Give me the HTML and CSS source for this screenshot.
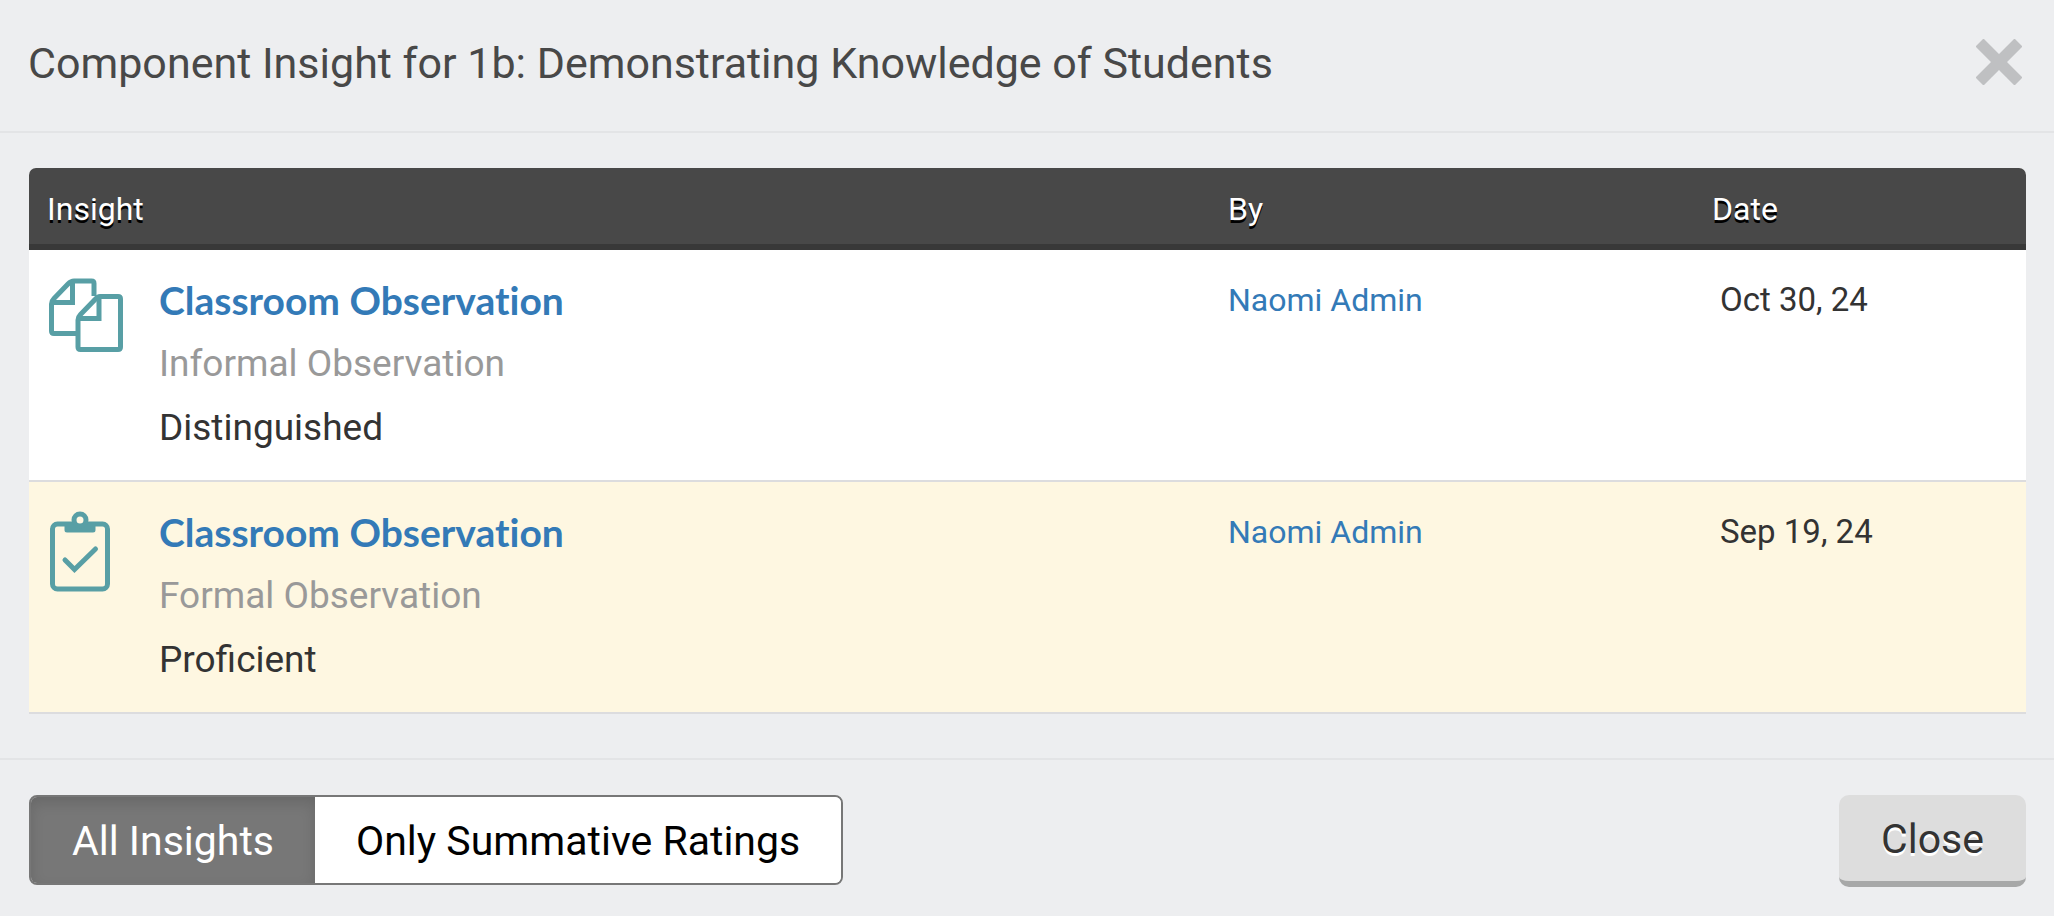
FILE: index.html
```html
<!DOCTYPE html>
<html lang="en">
<head>
    <meta charset="UTF-8">
    <meta name="viewport" content="width=device-width, initial-scale=1.0">
    <title>Component Insight</title>
    <link rel="stylesheet" href="styles.css">
</head>
<body>
    <div class="modal">
        <header class="modal-header">
            <h1 class="modal-title">Component Insight for 1b: Demonstrating Knowledge of Students</h1>
            <button type="button" class="close-icon" aria-label="Close">
                <svg viewBox="0 0 46 46" width="46" height="46">
                    <path d="M7 0 H8 L23 15 L38 0 H39 L46 7 V8 L31 23 L46 38 V39 L39 46 H38 L23 31 L8 46 H7 L0 39 V38 L15 23 L0 8 V7 Z"/>
                </svg>
            </button>
        </header>

        <div class="modal-body">
            <table class="insights">
                <thead>
                    <tr>
                        <th class="col-insight">Insight</th>
                        <th class="col-by">By</th>
                        <th class="col-date">Date</th>
                    </tr>
                </thead>
                <tbody>
                    <tr>
                        <td>
                            <div class="insight">
                                <svg class="insight-icon" viewBox="0 0 80 92" width="80" height="92">
                                    <path d="M31 65.5 H7 Q4.5 65.5 4.5 63 V36 Q4.5 33 7 30.5 L21 16 Q24 13 27 13 H44.5 Q47 13 47 15.5 V28"/>
                                    <path d="M25.5 13 V34.5 H5"/>
                                    <path d="M53 28.5 H71 Q73.5 28.5 73.5 31 V79 Q73.5 81.5 71 81.5 H33.5 Q31 81.5 31 79 V52 Q31 49 33.5 46.5 L48 31.5 Q50.5 28.5 53 28.5 Z"/>
                                    <path d="M52 29 V50.5 H31"/>
                                </svg>
                                <div>
                                    <a href="#" class="insight-name">Classroom Observation</a>
                                    <p class="insight-type">Informal Observation</p>
                                    <p class="insight-rating">Distinguished</p>
                                </div>
                            </div>
                        </td>
                        <td><a href="#">Naomi Admin</a></td>
                        <td class="date">Oct 30, 24</td>
                    </tr>
                    <tr class="summative">
                        <td>
                            <div class="insight">
                                <svg class="insight-icon" viewBox="0 0 80 92" width="80" height="92">
                                    <rect x="5.5" y="24" width="55" height="65" rx="5"/>
                                    <path d="M20 24.5 V30 H46 V24.5 Z" stroke-linejoin="round" fill="#589fa5"/>
                                    <circle cx="33" cy="20" r="6" fill="#fef7e1"/>
                                    <path d="M18 60 L27.5 69.5 L48.500 49" stroke-linecap="round"/>
                                </svg>
                                <div>
                                    <a href="#" class="insight-name">Classroom Observation</a>
                                    <p class="insight-type">Formal Observation</p>
                                    <p class="insight-rating">Proficient</p>
                                </div>
                            </div>
                        </td>
                        <td><a href="#">Naomi Admin</a></td>
                        <td class="date">Sep 19, 24</td>
                    </tr>
                </tbody>
            </table>
        </div>

        <footer class="modal-footer">
            <div class="btn-group">
                <button type="button" class="btn-toggle active">All Insights</button>
                <button type="button" class="btn-toggle">Only Summative Ratings</button>
            </div>
            <button type="button" class="btn-close">Close</button>
        </footer>
    </div>
</body>
</html>
```

FILE: styles.css
```css
* {
    box-sizing: border-box;
}
body {
    margin: 0;
    background: #edeef0;
    color: #333;
    font-family: Roboto, "Liberation Sans", sans-serif;
    font-size: 32px;
}
a {
    color: #337ab7;
    text-decoration: none;
}
button {
    font-family: inherit;
    cursor: pointer;
}
.modal-header {
    display: flex;
    justify-content: space-between;
    align-items: flex-start;
    padding: 33px 28px 37px;
    border-bottom: 2px solid #e3e4e6;
}
.modal-title {
    margin: 0;
    color: #484848;
    font-size: 43px;
    font-weight: 400;
    line-height: 61px;
}
.close-icon {
    display: flex;
    margin: 0;
    padding: 6px 4px 0 0;
    border: 0;
    background: none;
}
.close-icon svg {
    fill: #bfc0c2;
}
.modal-body {
    padding: 35px 28px 44px 29px;
}
.insights {
    width: 100%;
    table-layout: fixed;
    border-collapse: separate;
    border-spacing: 0;
    background: #fff;
    border-radius: 7px 7px 0 0;
}
.insights th {
    padding: 21px 18px 15px;
    background: #484848;
    border-bottom: 6px solid #383838;
    color: #fff;
    font-weight: 400;
    line-height: 40px;
    text-align: left;
    text-shadow: 0 3px 0 #000;
}
.insights th:first-child {
    border-top-left-radius: 7px;
}
.insights th:last-child {
    border-top-right-radius: 7px;
}
.col-by {
    width: 484px;
}
.col-date {
    width: 332px;
}
.insights td {
    padding: 18px 18px 20px;
    border-bottom: 2px solid #dcdcde;
    line-height: 64px;
    vertical-align: top;
}
.insights td.date {
    padding-left: 26px;
    font-size: 33px;
}
.summative {
    background: #fef7e1;
}
.insight {
    display: flex;
    gap: 32px;
}
.insight-icon {
    flex: none;
    fill: none;
    stroke: #589fa5;
    stroke-width: 5;
}
.insight-name {
    display: block;
    font-family: Lato, sans-serif;
    font-size: 39px;
    font-weight: 700;
    font-variant-ligatures: none;
}
.insight p {
    margin: 0;
    font-size: 37px;
}
.insight-type {
    color: #999;
}
.modal-footer {
    display: flex;
    justify-content: space-between;
    align-items: flex-start;
    padding: 35px 28px 28px 29px;
    border-top: 2px solid #e3e4e6;
}
.btn-group {
    display: flex;
    overflow: hidden;
    border: 2px solid #777;
    border-radius: 8px;
}
.btn-toggle {
    padding: 14px 41px 12px;
    border: 0;
    background: #fff;
    color: #000;
    font-size: 41px;
    line-height: 60px;
}
.btn-toggle.active {
    background: #777;
    color: #fff;
    box-shadow: inset 0 6px 14px rgba(0,0,0,0.125);
}
.btn-close {
    padding: 14px 42px 12px;
    border: 0;
    border-bottom: 6px solid #a7a8a8;
    border-radius: 10px;
    background: #ddd;
    color: #333;
    font-size: 41px;
    line-height: 60px;
    text-shadow: 0 3px 0 #fff;
}
```
